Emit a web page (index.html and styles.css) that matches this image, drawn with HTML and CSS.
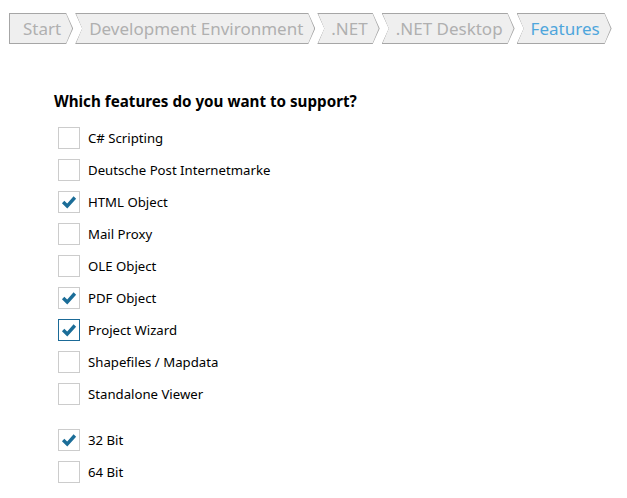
FILE: index.html
```html
<!DOCTYPE html>
<html>
<head>
<meta charset="utf-8">
<link rel="stylesheet" href="styles.css">
</head>
<body>
<nav class="crumbs">
  <div class="crumb first"><span>Start</span></div>
  <div class="crumb"><span>Development Environment</span></div>
  <div class="crumb"><span>.NET</span></div>
  <div class="crumb"><span>.NET Desktop</span></div>
  <div class="crumb active"><span>Features</span></div>
</nav>
<main class="content">
  <h1 class="title">Which features do you want to support?</h1>
  <ul class="list">
    <li class="item"><span class="box"></span><span class="label">C# Scripting</span></li>
    <li class="item"><span class="box"></span><span class="label">Deutsche Post Internetmarke</span></li>
    <li class="item"><span class="box checked"><svg viewBox="0 0 20 20"><path d="M3.5 10 L8 14.5 L16.5 5"/></svg></span><span class="label">HTML Object</span></li>
    <li class="item"><span class="box"></span><span class="label">Mail Proxy</span></li>
    <li class="item"><span class="box"></span><span class="label">OLE Object</span></li>
    <li class="item"><span class="box checked"><svg viewBox="0 0 20 20"><path d="M3.5 10 L8 14.5 L16.5 5"/></svg></span><span class="label">PDF Object</span></li>
    <li class="item"><span class="box checked focus"><svg viewBox="0 0 20 20"><path d="M3.5 10 L8 14.5 L16.5 5"/></svg></span><span class="label">Project Wizard</span></li>
    <li class="item"><span class="box"></span><span class="label">Shapefiles / Mapdata</span></li>
    <li class="item"><span class="box"></span><span class="label">Standalone Viewer</span></li>
  </ul>
  <ul class="list second">
    <li class="item"><span class="box checked"><svg viewBox="0 0 20 20"><path d="M3.5 10 L8 14.5 L16.5 5"/></svg></span><span class="label">32 Bit</span></li>
    <li class="item"><span class="box"></span><span class="label">64 Bit</span></li>
  </ul>
</main>
</body>
</html>
```
FILE: styles.css
```css
html, body {
  margin: 0;
  padding: 0;
  background: #ffffff;
  font-family: "Noto Sans", "Open Sans", sans-serif;
}

.crumbs {
  display: flex;
  gap: 2px;
  padding: 13px 0 0 9px;
}

.crumb {
  position: relative;
  height: 31px;
  background: #a6a6a6;
  clip-path: polygon(0 0, calc(100% - 7px) 0, 100% 50%, calc(100% - 7px) 100%, 0 100%, 7px 50%);
  padding: 0 12px 0 14px;
  display: flex;
  align-items: center;
  font-size: 17px;
  color: #b0b0b0;
}

.crumb::before {
  content: "";
  position: absolute;
  inset: 1px 1px 1px 1px;
  background: #efefef;
  clip-path: polygon(0 0, calc(100% - 6px) 0, 100% 50%, calc(100% - 6px) 100%, 0 100%, 6px 50%);
}

.crumb.first {
  clip-path: polygon(0 0, calc(100% - 7px) 0, 100% 50%, calc(100% - 7px) 100%, 0 100%);
  padding-left: 14px;
  padding-right: 12px;
}

.crumb.first::before {
  clip-path: polygon(0 0, calc(100% - 6px) 0, 100% 50%, calc(100% - 6px) 100%, 0 100%);
}

.crumb span {
  position: relative;
  line-height: 1;
  margin-top: -1px;
}

.crumb.active {
  color: #4ea6dc;
}

.content {
  padding: 0 0 0 54px;
}

.title {
  margin: 47px 0 11px 0;
  font-size: 15.2px;
  font-weight: bold;
  color: #000;
  line-height: 20px;
}

.list {
  list-style: none;
  margin: 0;
  padding: 0 0 0 4px;
}

.list.second {
  margin-top: 14px;
}

.item {
  display: flex;
  align-items: center;
  height: 32px;
}

.box {
  box-sizing: border-box;
  width: 22px;
  height: 22px;
  border: 1px solid #cccccc;
  background: #fff;
  margin-right: 8px;
  display: flex;
  align-items: center;
  justify-content: center;
}

.box.focus {
  border-color: #1b6a97;
}

.box svg {
  width: 18px;
  height: 18px;
}

.box svg path {
  fill: none;
  stroke: #1b6d98;
  stroke-width: 3.8;
  stroke-linecap: butt;
  stroke-linejoin: miter;
}

.label {
  font-size: 13.2px;
  color: #000;
}
```
